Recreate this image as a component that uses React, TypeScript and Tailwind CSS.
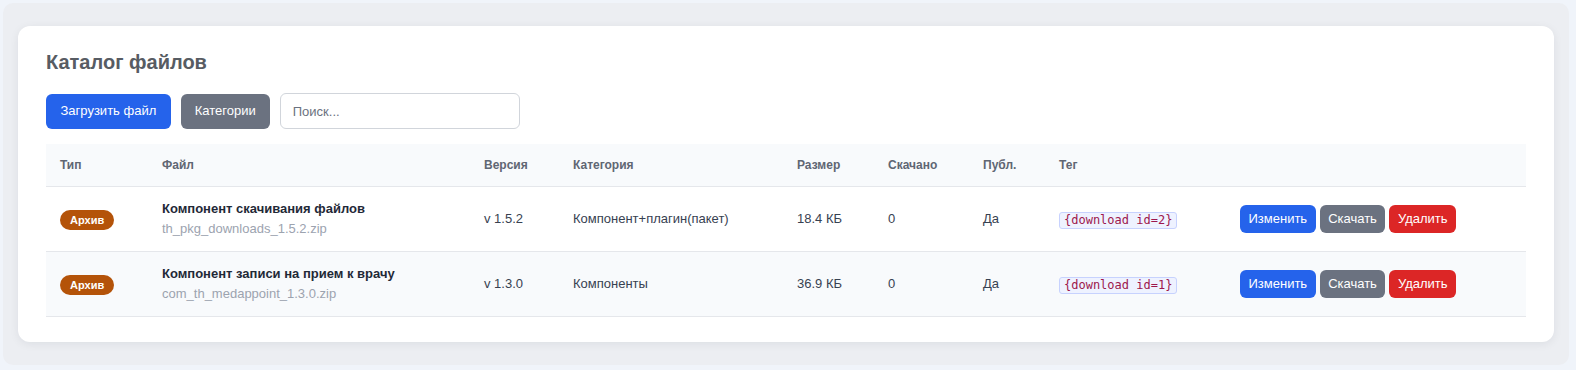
const files = [
  {
    name: 'Компонент скачивания файлов',
    file: 'th_pkg_downloads_1.5.2.zip',
    version: 'v 1.5.2',
    category: 'Компонент+плагин(пакет)',
    size: '18.4 КБ',
    downloads: '0',
    published: 'Да',
    tag: '{download id=2}',
  },
  {
    name: 'Компонент записи на прием к врачу',
    file: 'com_th_medappoint_1.3.0.zip',
    version: 'v 1.3.0',
    category: 'Компоненты',
    size: '36.9 КБ',
    downloads: '0',
    published: 'Да',
    tag: '{download id=1}',
  },
]

const columns = ['Тип', 'Файл', 'Версия', 'Категория', 'Размер', 'Скачано', 'Публ.', 'Тег', '']

export default function App() {
  return (
    <div
      className="min-h-[370px] bg-[#f0f4fa] pl-[3px] pr-[7px] pt-[3px] pb-[5px]"
      style={{ fontFamily: '"Liberation Sans", Arial, sans-serif' }}
    >
      <div className="rounded-[10px] bg-[#eceef2] px-[15px] pt-[23px] pb-[23px]">
        <div className="rounded-xl bg-white px-7 pt-6 pb-[25px] shadow-[0_2px_10px_rgba(15,23,42,0.07)]">
          <h2 className="text-[20px] leading-[25px] font-bold text-[#575c63]">Каталог файлов</h2>

          {/* Toolbar */}
          <div className="mt-[18px] flex items-center gap-[10px]">
            <button className="h-[35px] rounded-md bg-[#2563eb] px-[14.5px] text-[13px] text-white">
              Загрузить файл
            </button>
            <button className="h-[35px] rounded-md bg-[#6b7280] px-[14px] text-[13px] text-white">
              Категории
            </button>
            <input
              placeholder="Поиск..."
              className="h-[36px] w-[240px] rounded-md border border-[#d1d5db] px-3 text-[13px] text-[#374151] placeholder:text-[#6b7280] outline-none"
            />
          </div>

          {/* Table */}
          <table className="mt-[15px] w-full table-fixed border-collapse">
            <colgroup>
              <col className="w-[102px]" />
              <col className="w-[322px]" />
              <col className="w-[89px]" />
              <col className="w-[224px]" />
              <col className="w-[91px]" />
              <col className="w-[95px]" />
              <col className="w-[76px]" />
              <col className="w-[181px]" />
              <col />
            </colgroup>
            <thead>
              <tr className="bg-[#f8fafc] border-b border-[#e5e7eb]">
                {columns.map((c, i) => (
                  <th
                    key={i}
                    className="py-[13px] pl-[14px] text-left text-[12px] leading-4 font-bold text-[#5f6673]"
                  >
                    {c}
                  </th>
                ))}
              </tr>
            </thead>
            <tbody>
              {files.map((f, i) => (
                <tr
                  key={f.file}
                  className={`border-b border-[#e5e7eb] ${i % 2 === 1 ? 'bg-[#f8fafc]' : 'bg-white'}`}
                >
                  <td className="pl-[14px] align-middle">
                    <span className="inline-flex h-[20px] items-center rounded-full bg-[#b45309] px-[10px] text-[11px] font-bold text-white">
                      Архив
                    </span>
                  </td>
                  <td className="py-[13px] pl-[14px] align-middle">
                    <div className="text-[13px] leading-[18px] font-bold text-[#1f2937]">{f.name}</div>
                    <div className="mt-[2px] text-[13px] leading-[18px] text-[#9ca3af]">{f.file}</div>
                  </td>
                  <td className="pl-[14px] text-[13px] text-[#374151]">{f.version}</td>
                  <td className="pl-[14px] text-[13px] text-[#374151]">{f.category}</td>
                  <td className="pl-[14px] text-[13px] text-[#374151]">{f.size}</td>
                  <td className="pl-[14px] text-[13px] text-[#374151]">{f.downloads}</td>
                  <td className="pl-[14px] text-[13px] text-[#374151]">{f.published}</td>
                  <td className="pl-[14px]">
                    <code
                      className="inline-block rounded-[3px] border border-[#c7d2fe] bg-[#eef2ff] px-[4px] text-[12px] leading-[15px] text-[#9d174d]"
                      style={{ fontFamily: '"DejaVu Sans Mono", monospace' }}
                    >
                      {f.tag}
                    </code>
                  </td>
                  <td className="pl-[14px]">
                    <div className="flex items-center gap-1">
                      <button className="h-[28px] rounded-md bg-[#2563eb] px-[8.5px] text-[13px] text-white">
                        Изменить
                      </button>
                      <button className="h-[28px] rounded-md bg-[#6b7280] px-[8.5px] text-[13px] text-white">
                        Скачать
                      </button>
                      <button className="h-[28px] rounded-md bg-[#dc2626] px-[8.5px] text-[13px] text-white">
                        Удалить
                      </button>
                    </div>
                  </td>
                </tr>
              ))}
            </tbody>
          </table>
        </div>
      </div>
    </div>
  )
}
